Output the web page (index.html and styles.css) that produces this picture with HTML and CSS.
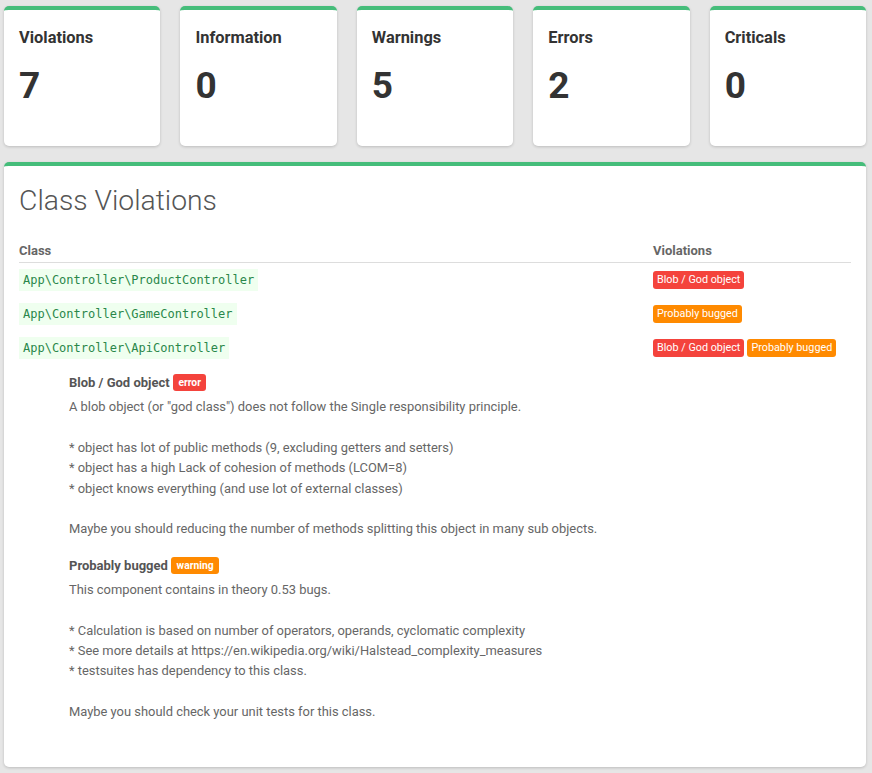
FILE: index.html
```html
<!DOCTYPE html>
<html lang="en">
<head>
<meta charset="utf-8">
<title>Violations</title>
<link rel="stylesheet" href="styles.css">
</head>
<body>
<div class="page">
  <div class="cards">
    <div class="card"><div class="label">Violations</div><div class="number">7</div></div>
    <div class="card"><div class="label">Information</div><div class="number">0</div></div>
    <div class="card"><div class="label">Warnings</div><div class="number">5</div></div>
    <div class="card"><div class="label">Errors</div><div class="number">2</div></div>
    <div class="card"><div class="label">Criticals</div><div class="number">0</div></div>
  </div>

  <div class="panel">
    <h1 class="title">Class Violations</h1>
    <table class="table">
      <thead>
        <tr><th>Class</th><th class="col-viol">Violations</th></tr>
      </thead>
      <tbody>
        <tr>
          <td><span class="code">App\Controller\ProductController</span></td>
          <td class="col-viol"><span class="badge red">Blob / God object</span></td>
        </tr>
        <tr>
          <td><span class="code">App\Controller\GameController</span></td>
          <td class="col-viol"><span class="badge orange">Probably bugged</span></td>
        </tr>
        <tr>
          <td><span class="code">App\Controller\ApiController</span></td>
          <td class="col-viol"><span class="badge red">Blob / God object</span> <span class="badge orange">Probably bugged</span></td>
        </tr>
        <tr>
          <td colspan="2" class="details">
            <div class="violation">
              <div class="v-head">Blob / God object <span class="tag red">error</span></div>
              <div class="v-text">A blob object (or "god class") does not follow the Single responsibility principle.

* object has lot of public methods (9, excluding getters and setters)
* object has a high Lack of cohesion of methods (LCOM=8)
* object knows everything (and use lot of external classes)

Maybe you should reducing the number of methods splitting this object in many sub objects.</div>
            </div>
            <div class="violation">
              <div class="v-head">Probably bugged <span class="tag orange">warning</span></div>
              <div class="v-text">This component contains in theory 0.53 bugs.

* Calculation is based on number of operators, operands, cyclomatic complexity
* See more details at https://en.wikipedia.org/wiki/Halstead_complexity_measures
* testsuites has dependency to this class.

Maybe you should check your unit tests for this class.</div>
            </div>
          </td>
        </tr>
      </tbody>
    </table>
  </div>
</div>
</body>
</html>
```

FILE: styles.css
```css
* { box-sizing: border-box; }
html, body { margin: 0; padding: 0; }
body {
  background: #e6e6e6;
  font-family: Roboto, "Liberation Sans", Arial, sans-serif;
  color: #333;
  width: 872px;
  height: 773px;
  overflow: hidden;
}
.page { padding: 6px 6px 0 4px; }
.cards {
  display: flex;
  gap: 20px;
}
.card {
  flex: 1 1 0;
  height: 140px;
  background: #fff;
  border-top: 4px solid #45bd7a;
  border-radius: 5px;
  box-shadow: 0 1px 3px rgba(0,0,0,0.18);
  padding: 18px 15px 0 15px;
}
.label {
  font-size: 16.4px;
  font-weight: 700;
  line-height: 1.2;
  color: #333;
}
.number {
  margin-top: 16px;
  font-size: 37px;
  font-weight: 700;
  line-height: 1.2;
  color: #333;
}
.panel {
  margin-top: 16px;
  background: #fff;
  border-top: 4px solid #45bd7a;
  border-radius: 5px;
  box-shadow: 0 1px 3px rgba(0,0,0,0.18);
  padding: 18px 15px 28px 15px;
  height: 605px;
}
.title {
  margin: 0 0 25px 0;
  font-size: 28.3px;
  font-weight: 300;
  line-height: 1.2;
  color: #555;
}
.table {
  width: 100%;
  border-collapse: collapse;
}
.table th {
  text-align: left;
  font-size: 13px;
  font-weight: 700;
  color: #666;
  padding: 0 0 3px 0;
  border-bottom: 1px solid #ddd;
  line-height: 16px;
}
.col-viol { width: 198px; }
.table td {
  padding: 6px 0;
  vertical-align: middle;
  font-size: 12px;
}
.code {
  display: inline-block;
  font-family: "DejaVu Sans Mono", "Liberation Mono", monospace;
  font-size: 12px;
  line-height: 16px;
  padding: 3px 4px;
  background: #efffef;
  color: #2a874a;
}
.badge {
  display: inline-block;
  font-size: 10.8px;
  line-height: 18px;
  padding: 0 4px;
  border-radius: 3px;
  color: #fff;
}
.red { background: #f4433c; }
.orange { background: #ff8a00; }
.table td.details {
  padding: 8px 0 0 50px;
}
.violation { margin-bottom: 16px; }
.v-head {
  font-size: 13px;
  font-weight: 700;
  color: #555;
  line-height: 20px;
}
.tag {
  display: inline-block;
  font-size: 10.3px;
  font-weight: 700;
  line-height: 17px;
  padding: 0 5.5px;
  border-radius: 3px;
  color: #fff;
  vertical-align: 1px;
}
.v-text {
  margin-top: 4px;
  white-space: pre-line;
  font-size: 12.92px;
  line-height: 20.4px;
  color: #666;
}
```
